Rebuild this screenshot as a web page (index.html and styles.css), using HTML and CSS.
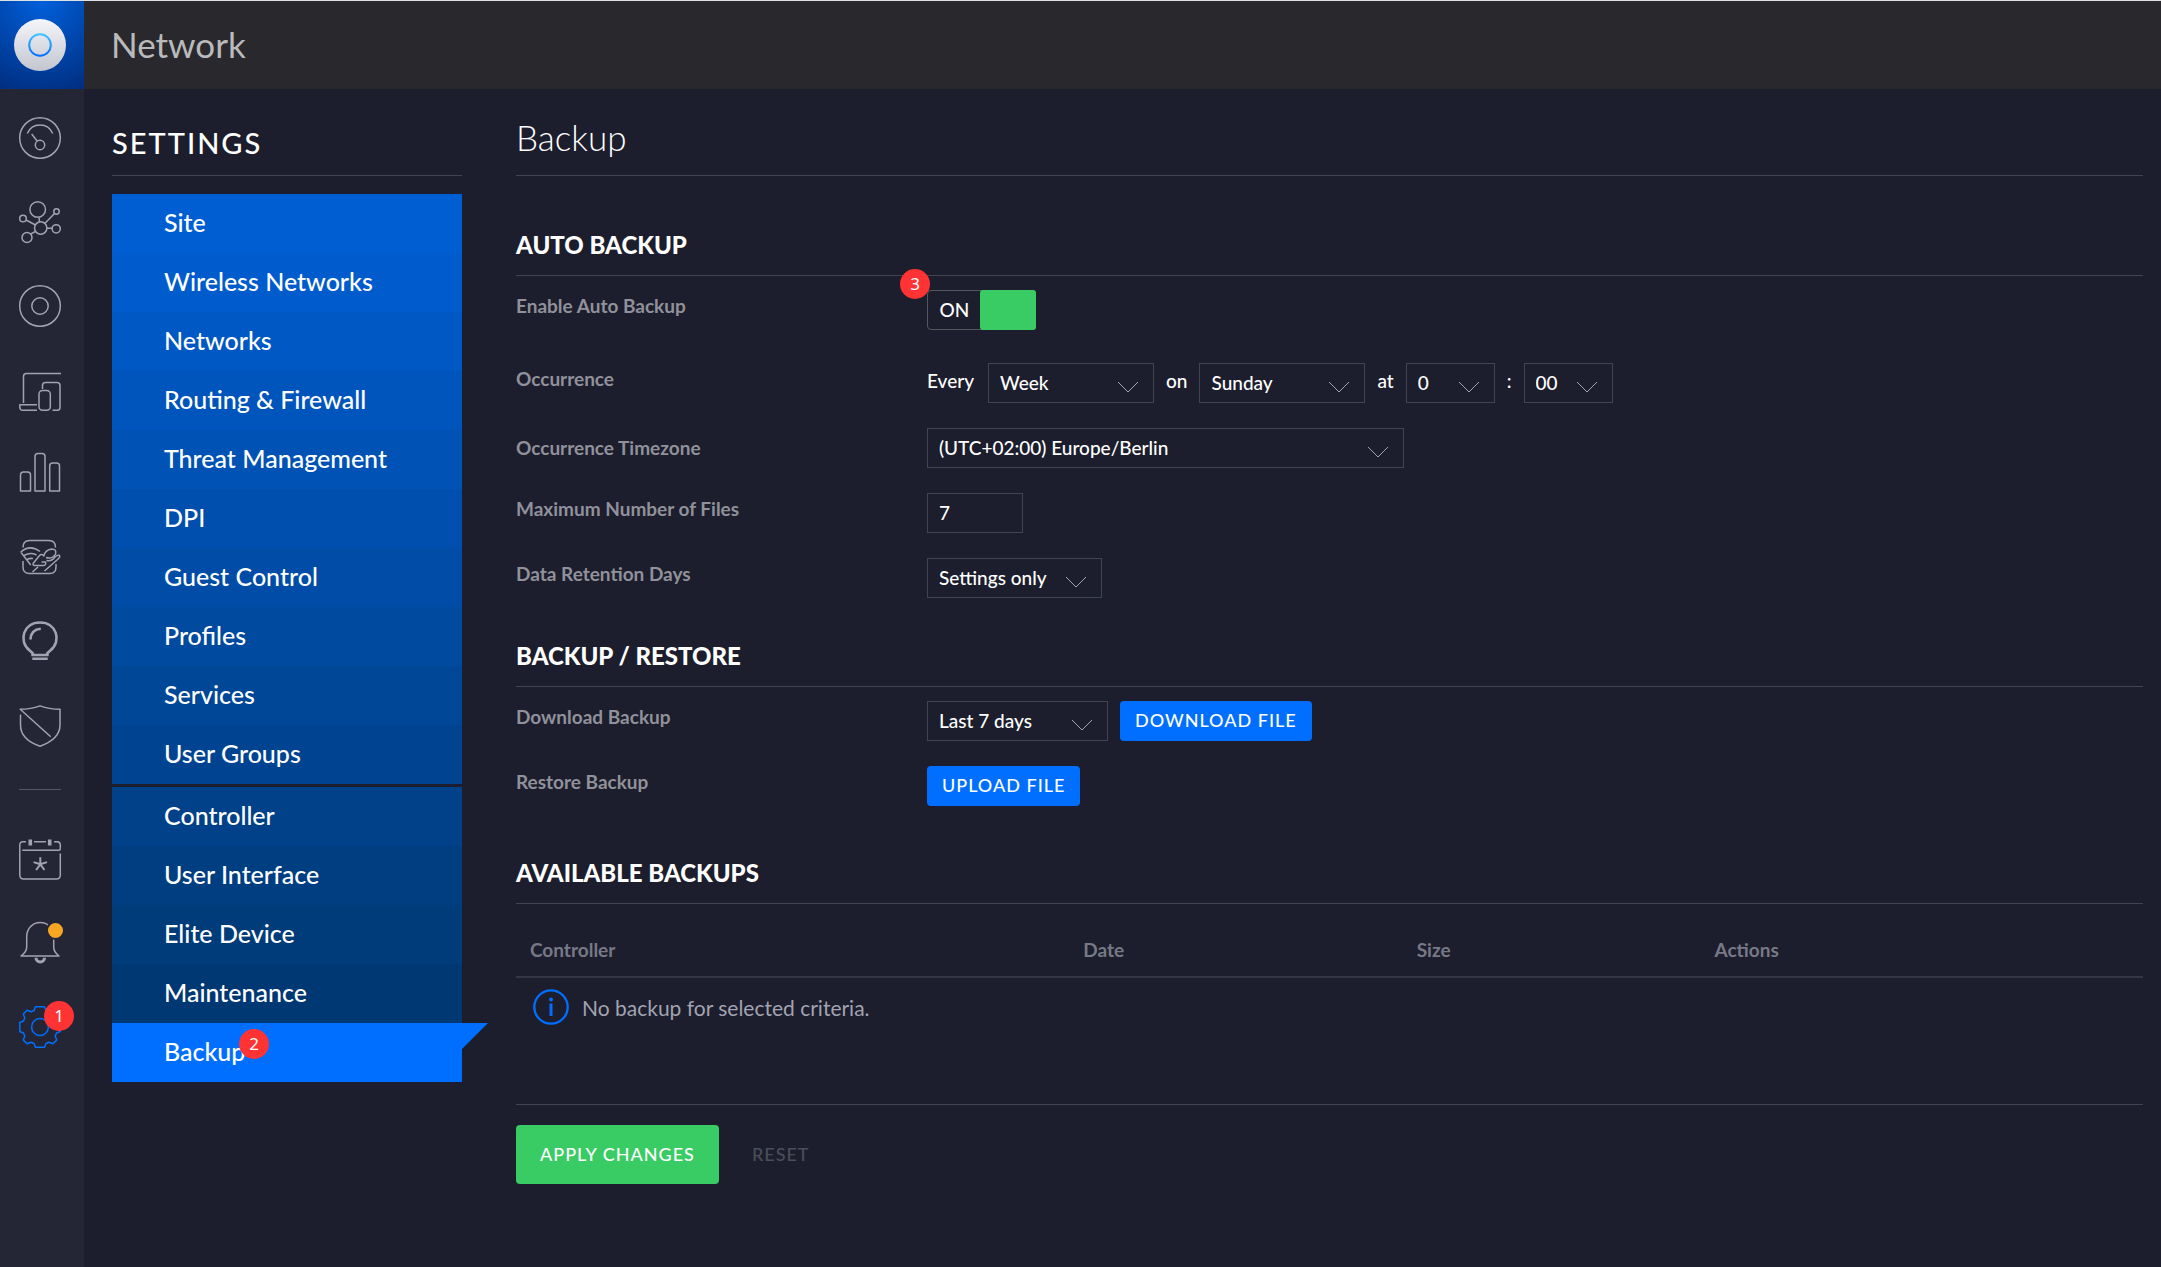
FILE: index.html
```html
<!DOCTYPE html>
<html lang="en">
<head>
    <meta charset="UTF-8">
    <meta name="viewport" content="width=device-width, initial-scale=1.0">
    <title>Network - Backup</title>
    <link rel="stylesheet" href="styles.css">
</head>
<body>
    <div class="app">
        <aside class="sidebar">
            <a class="logo" href="#" aria-label="Home">
                <svg width="52" height="52" viewBox="0 0 52 52">
                    <defs>
                        <linearGradient id="disc" x1="0" y1="0" x2="0" y2="1">
                            <stop offset="0" stop-color="#f5f6fa"/>
                            <stop offset="1" stop-color="#c3c5d0"/>
                        </linearGradient>
                        <linearGradient id="ring" x1="0" y1="0" x2="0" y2="1">
                            <stop offset="0" stop-color="#45c3ff"/>
                            <stop offset="1" stop-color="#006fff"/>
                        </linearGradient>
                    </defs>
                    <circle cx="26" cy="26" r="26" fill="url(#disc)"/>
                    <circle cx="26" cy="26" r="10.8" fill="none" stroke="url(#ring)" stroke-width="2"/>
                </svg>
            </a>
            <nav class="icons">
                <a href="#" aria-label="Dashboard">
                    <svg class="icon" viewBox="0 0 42 42"><circle cx="21" cy="21" r="20.3"/><path d="M8.3 16.5C13 5 29 5 33.7 16.5M12.7 17l5.6 7.2"/><circle cx="21" cy="28" r="4.7"/></svg>
                </a>
                <a href="#" aria-label="Topology">
                    <svg class="icon" viewBox="0 0 42 42"><circle cx="18.7" cy="8.5" r="7.8"/><circle cx="21.7" cy="27" r="6.2"/><circle cx="4" cy="17.5" r="3.3"/><circle cx="37.5" cy="10.5" r="2.7"/><circle cx="37.2" cy="27.8" r="4.1"/><circle cx="8" cy="36.5" r="5"/><path d="M20 16.3l.5 4.5M7 19l9.5 5M35.5 12.5L26 22.3M28 27.3h5M11.7 33l5-2.7"/></svg>
                </a>
                <a href="#" aria-label="Devices">
                    <svg class="icon" viewBox="0 0 42 42"><circle cx="21" cy="21" r="20.3"/><circle cx="21" cy="21" r="8.2"/></svg>
                </a>
                <a href="#" aria-label="Clients">
                    <svg class="icon" viewBox="0 0 42 42"><path d="M4.5 34V7.5q0-3 3-3H42M18 35.7H.8V38q0 3.3 3.3 3.3H18M23.5 20v-3.5q0-3 3-3H38q3 0 3 3v22q0 2.8-2.8 2.8H33.5"/><rect x="20" y="21.5" width="11.3" height="19.8" rx="3.5"/></svg>
                </a>
                <a href="#" aria-label="Statistics">
                    <svg class="icon" viewBox="0 0 42 42"><path d="M1.5 38V22q0-3 3-3h4q3 0 3 3v16zM16 38V3.5q0-3 3-3h4q3 0 3 3V38zM30.7 38V13q0-3 3-3h3.800q3 0 3 3v25z"/></svg>
                </a>
                <a href="#" aria-label="Map">
                    <svg class="icon" viewBox="0 0 42 42"><path d="M4 10.500q0-7 6.500-7H30q6.500 0 6.500 7M4 24v6q0 6.500 6.500 6.500H31q6 0 6-6.500v-3M1.700 15L11.700 28M1.700 15Q11 7 21 14.500M5 18.500q6.500-3.500 12.500-.500M8 22.500q3-1.500 6-1M14.500 26l6-7.500q2.500-2.500 5 .800M14.500 26q-1.500 2.500 1.500 2.500h8q3.500 0 2.500-3.500h-4M24.500 19.500q1.500-6.500 8-7.500 5.500 0 4 5-3 5.500-9.500 3.500M27.500 23.500q5.500 1 8.500-3.500 4.500-3.500 4.800-.500 0 1-2 2.700L25.500 34M19 30l-5.500 5"/></svg>
                </a>
                <a href="#" aria-label="Insights">
                    <svg class="icon" viewBox="0 0 42 42"><path stroke-width="2.6" d="M14 33.3q-.5-2-3.500-4C-1 20 4.500 1.500 21 1.500S43 20 31.500 29.300q-3 2-3.500 4"/><path stroke-width="2.6" d="M11.500 18.500Q12 8.500 21.800 7.800M12.300 34h17.400M13.300 37.700h15.400"/></svg>
                </a>
                <a href="#" aria-label="Threat Management">
                    <svg class="icon" viewBox="0 0 42 42"><path d="M1.500 9.500V20q0 14.500 19.500 21.200Q41 34 41 20V4.300Q30 4.300 21 .9 12 4.300 1.200 4.300l30.500 27.500"/></svg>
                </a>
            </nav>
            <hr class="divider">
            <nav class="icons">
                <a href="#" aria-label="Events">
                    <svg class="icon" viewBox="0 0 42 42"><path d="M7 3.700H4Q.8 3.700.8 7v30q0 4 4 4h32.500q4 0 4-4V15.500M3.300 12.300h36.500q1.500 0 1.500-1.500V7q0-3.300-3-3.300H35M15 3.700h12"/><path stroke-width="3.6" d="M11.300 1.500v6M30.700 1.500v6"/><path stroke-width="2" d="M21.300 26.300v-7M21.300 26.300l-6.700-2.200M21.300 26.300l6.700-2.200M21.300 26.300l-4.200 5.700M21.300 26.300l4.200 5.700"/></svg>
                </a>
                <a href="#" aria-label="Alerts">
                    <svg class="icon" viewBox="0 0 42 42"><path d="M2 34q5.700-4 5.700-9V15C7.700-4.200 34.700-4.200 34.700 15v10q0 5 5.300 9z"/><path stroke-width="3" d="M17 35.800c0 5.500 8.500 5.500 8.500 0"/><circle class="dot" cx="36.5" cy="8.5" r="8.5"/></svg>
                </a>
                <a class="active" href="#" aria-label="Settings">
                    <svg class="icon" viewBox="0 0 42 42"><path d="M16.500.8h9L27 4.500l3 1.300 4-1.500L37.700 8l-1.500 4 1.300 3 3.700 1.500v9L37.500 27l-1.300 3 1.500 4-3.700 3.700-4-1.500-3 1.300-1.500 3.700h-9L15 37.500l-3-1.300-4 1.500L4.300 34l1.500-4-1.300-3-3.700-1.500v-9L4.500 15l1.300-3-1.500-4L8 4.300l4 1.500 3-1.300z"/><circle cx="21" cy="21" r="8.4"/></svg>
                    <span class="badge badge-settings">1</span>
                </a>
            </nav>
        </aside>

        <div class="main">
            <header class="topbar">Network</header>
            <div class="page">
                <section class="settings">
                    <h1 class="settings-title">Settings</h1>
                    <ul class="menu">
                        <li><a href="#">Site</a></li>
                        <li><a href="#">Wireless Networks</a></li>
                        <li><a href="#">Networks</a></li>
                        <li><a href="#">Routing &amp; Firewall</a></li>
                        <li><a href="#">Threat Management</a></li>
                        <li><a href="#">DPI</a></li>
                        <li><a href="#">Guest Control</a></li>
                        <li><a href="#">Profiles</a></li>
                        <li><a href="#">Services</a></li>
                        <li><a href="#">User Groups</a></li>
                        <li><a href="#">Controller</a></li>
                        <li><a href="#">User Interface</a></li>
                        <li><a href="#">Elite Device</a></li>
                        <li><a href="#">Maintenance</a></li>
                        <li class="selected"><a href="#">Backup<span class="badge badge-backup">2</span></a></li>
                    </ul>
                </section>

                <form class="content">
                    <h2 class="page-title">Backup</h2>

                    <section class="group">
                        <h3 class="section-title">Auto Backup</h3>
                        <div class="row row-toggle">
                            <label class="row-label" for="autoBackup">Enable Auto Backup</label>
                            <div class="toggle">
                                <input type="checkbox" id="autoBackup" checked>
                                <span class="toggle-text">ON</span>
                                <span class="toggle-knob"></span>
                                <span class="badge badge-toggle">3</span>
                            </div>
                        </div>
                        <div class="row">
                            <label class="row-label" for="period">Occurrence</label>
                            <div class="controls">
                                <span class="word word-first">Every</span>
                                <select id="period" class="w-medium"><option>Week</option></select>
                                <label class="word" for="day">on</label>
                                <select id="day" class="w-medium"><option>Sunday</option></select>
                                <label class="word" for="hour">at</label>
                                <select id="hour" class="w-small"><option>0</option></select>
                                <label class="word" for="minute">:</label>
                                <select id="minute" class="w-small"><option>00</option></select>
                            </div>
                        </div>
                        <div class="row row-centered">
                            <label class="row-label" for="timezone">Occurrence Timezone</label>
                            <select id="timezone" class="w-large"><option>(UTC+02:00) Europe/Berlin</option></select>
                        </div>
                        <div class="row">
                            <label class="row-label" for="maxFiles">Maximum Number of Files</label>
                            <input type="text" id="maxFiles" value="7">
                        </div>
                        <div class="row">
                            <label class="row-label" for="retention">Data Retention Days</label>
                            <select id="retention" class="w-retention"><option>Settings only</option></select>
                        </div>
                    </section>

                    <section class="group">
                        <h3 class="section-title">Backup / Restore</h3>
                        <div class="row">
                            <label class="row-label" for="download">Download Backup</label>
                            <div class="controls">
                                <select id="download" class="w-range"><option>Last 7 days</option></select>
                                <button type="button" class="btn">Download file</button>
                            </div>
                        </div>
                        <div class="row">
                            <label class="row-label" for="upload">Restore Backup</label>
                            <button type="button" id="upload" class="btn">Upload file</button>
                        </div>
                    </section>

                    <section class="group group-table">
                        <h3 class="section-title">Available Backups</h3>
                        <table class="backups">
                            <thead>
                                <tr>
                                    <th class="col-controller">Controller</th>
                                    <th class="col-date">Date</th>
                                    <th class="col-size">Size</th>
                                    <th>Actions</th>
                                </tr>
                            </thead>
                            <tbody>
                                <tr>
                                    <td colspan="4">
                                        <div class="empty">
                                            <svg width="36" height="36" viewBox="0 0 36 36"><circle cx="18" cy="18" r="16.7" fill="none" stroke="#006fff" stroke-width="2.3"/><circle cx="18" cy="10.5" r="2" fill="#006fff"/><path d="M18 14.5v12.500" stroke="#006fff" stroke-width="3"/></svg>
                                            <span>No backup for selected criteria.</span>
                                        </div>
                                    </td>
                                </tr>
                            </tbody>
                        </table>
                    </section>

                    <div class="actions">
                        <button type="submit" class="btn btn-apply">Apply changes</button>
                        <button type="reset" class="btn btn-reset" disabled>Reset</button>
                    </div>
                </form>
            </div>
        </div>
    </div>
</body>
</html>
```
FILE: styles.css
```css
* {
    box-sizing: border-box;
}

body {
    margin: 0;
    background-color: #1c1e2d;
    color: #fff;
    font-family: Lato, "Open Sans", sans-serif;
    font-size: 19px;
    font-weight: 500;
}

a {
    color: inherit;
    text-decoration: none;
}

.app {
    display: flex;
    min-height: 100vh;
    border-top: 1px solid #dfe1e2;
}

/* left icon bar */
.sidebar {
    flex: none;
    width: 84px;
    background-color: #242635;
}

.logo {
    display: flex;
    align-items: center;
    height: 88px;
    padding-left: 14px;
    background: radial-gradient(circle at 50% 0, #0060db, #002e80 100%);
}

.icons {
    padding-top: 7px;
}

.icons a {
    position: relative;
    display: flex;
    align-items: center;
    height: 84px;
    padding-left: 19px;
    color: #a2a3b1;
}

.icons a.active {
    color: #006fff;
}

.icon {
    width: 42px;
    height: 42px;
    overflow: visible;
    fill: none;
    stroke: currentColor;
    stroke-width: 1.5;
    stroke-linejoin: round;
}

.dot {
    fill: #f5a623;
    stroke: #242635;
    stroke-width: 2;
}

.divider {
    width: 42px;
    margin: 21px 0 20px 19px;
    border: 0;
    border-top: 1px solid #555763;
}

.badge {
    position: absolute;
    width: 30px;
    height: 30px;
    border-radius: 50%;
    background-color: #ff3333;
    color: #fff;
    font-family: "Noto Sans", sans-serif;
    font-size: 17px;
    font-weight: 400;
    line-height: 30px;
    text-align: center;
}

.badge-settings {
    top: 16px;
    left: 44px;
}

.badge-backup {
    top: 6px;
    left: 127px;
}

.badge-toggle {
    top: -22px;
    left: -28px;
}

.main {
    flex: 1;
    min-width: 0;
}

.topbar {
    height: 88px;
    padding-left: 27px;
    background-color: #29292d;
    color: #bababc;
    font-size: 35px;
    font-weight: 400;
    line-height: 86px;
}

.page {
    display: flex;
    gap: 54px;
    padding: 0 18px 40px 28px;
}

/* settings menu */
.settings {
    flex: none;
    width: 350px;
}

.settings-title,
.page-title {
    height: 87px;
    margin: 0;
    border-bottom: 1px solid #41454f;
}

.settings-title {
    font-size: 29px;
    font-weight: 500;
    letter-spacing: 2px;
    line-height: 108px;
    text-transform: uppercase;
}

.menu {
    margin: 18px 0 0;
    padding: 0;
    list-style: none;
}

.menu a {
    position: relative;
    display: block;
    padding: 0 0 2px 52px;
    font-size: 25px;
    line-height: 57px;
}

.menu li:nth-child(1) { background-color: #005ed3; }
.menu li:nth-child(2) { background-color: #005bcc; }
.menu li:nth-child(3) { background-color: #0058c4; }
.menu li:nth-child(4) { background-color: #0055bd; }
.menu li:nth-child(5) { background-color: #0052b5; }
.menu li:nth-child(6) { background-color: #004fae; }
.menu li:nth-child(7) { background-color: #004ca7; }
.menu li:nth-child(8) { background-color: #004a9f; }
.menu li:nth-child(9) { background-color: #004798; }
.menu li:nth-child(10) { background-color: #004491; }
.menu li:nth-child(11) { background-color: #004189; margin-top: 3px; }
.menu li:nth-child(12) { background-color: #003e82; }
.menu li:nth-child(13) { background-color: #003b7a; }
.menu li:nth-child(14) { background-color: #003873; }

.menu .selected {
    position: relative;
    background-color: #006fff;
}

.selected::after {
    content: "";
    position: absolute;
    top: 0;
    left: 100%;
    border-top: 26px solid #006fff;
    border-right: 26px solid transparent;
}

/* backup form */
.content {
    flex: 1;
    min-width: 0;
}

.page-title {
    font-size: 35px;
    font-weight: 300;
    line-height: 96px;
}

.group {
    padding-top: 17px;
}

.page-title + .group {
    padding-top: 53px;
}

.group-table {
    padding-top: 26px;
}

.section-title {
    margin: 0 0 14px;
    padding-bottom: 14px;
    border-bottom: 1px solid #41454f;
    font-size: 24px;
    font-weight: 900;
    line-height: 32px;
    text-transform: uppercase;
}

.row {
    display: flex;
    align-items: flex-start;
    min-height: 40px;
    margin-bottom: 25px;
}

.row-toggle {
    margin-bottom: 33px;
}

.row-centered {
    align-items: center;
}

.row-label {
    flex: none;
    width: 411px;
    color: #90919a;
    font-weight: 700;
    line-height: 32px;
}

.controls {
    display: flex;
    gap: 12px;
}

.word {
    line-height: 36px;
}

.word-first {
    padding-right: 2px;
}

select,
input[type="text"] {
    height: 40px;
    padding: 0 11px 2px;
    border: 1px solid #41454f;
    border-radius: 0;
    background-color: transparent;
    color: #fff;
    font-family: inherit;
    font-size: 19px;
    font-weight: 500;
}

select {
    appearance: none;
    background-image: url("data:image/svg+xml,%3Csvg xmlns='http://www.w3.org/2000/svg' width='22' height='12' fill='none' stroke='%23a2a3b1'%3E%3Cpath d='M1 1l10 10L21 1'/%3E%3C/svg%3E");
    background-repeat: no-repeat;
    background-position: right 14px top 17px;
}

input[type="text"] {
    width: 96px;
}

.w-small {
    width: 89px;
}

.w-medium {
    width: 166px;
}

.w-retention {
    width: 175px;
}

.w-range {
    width: 181px;
}

.w-large {
    width: 477px;
}

.toggle {
    position: relative;
    display: flex;
    width: 109px;
    height: 40px;
    border: 1px solid #55575f;
    border-radius: 4px;
}

.toggle input {
    position: absolute;
    inset: 0;
    width: 100%;
    height: 100%;
    margin: 0;
    opacity: 0;
}

.toggle-text {
    flex: 1;
    line-height: 38px;
    text-align: center;
}

.toggle-knob {
    width: 56px;
    margin: -1px;
    border-radius: 3px;
    background-color: #39cc64;
}

.btn {
    height: 40px;
    padding: 0 15px 2px;
    border: 0;
    border-radius: 4px;
    background-color: #006fff;
    color: #fff;
    font-family: inherit;
    font-size: 18px;
    font-weight: 500;
    letter-spacing: 1px;
    text-transform: uppercase;
}

.backups {
    width: 100%;
    table-layout: fixed;
    border-collapse: collapse;
    border-bottom: 1px solid #41454f;
}

.backups th {
    padding: 18px 14px 12px;
    border-bottom: 2px solid #343645;
    color: #777986;
    font-weight: 700;
    line-height: 28px;
    text-align: left;
}

.backups td {
    height: 127px;
    padding: 11px 17px;
    vertical-align: top;
}

.col-controller {
    width: 34%;
}

.col-date {
    width: 20.5%;
}

.col-size {
    width: 18.3%;
}

.empty {
    display: flex;
    gap: 13px;
    color: #a2a3b1;
    font-size: 21px;
    font-weight: 400;
    line-height: 38px;
}

.actions {
    display: flex;
    gap: 9px;
    margin-top: 20px;
}

.btn-apply,
.btn-reset {
    height: 59px;
    padding: 0 24px;
}

.btn-apply {
    background-color: #39cc64;
}

.btn-reset {
    background-color: transparent;
    color: #4b4d59;
}
```
